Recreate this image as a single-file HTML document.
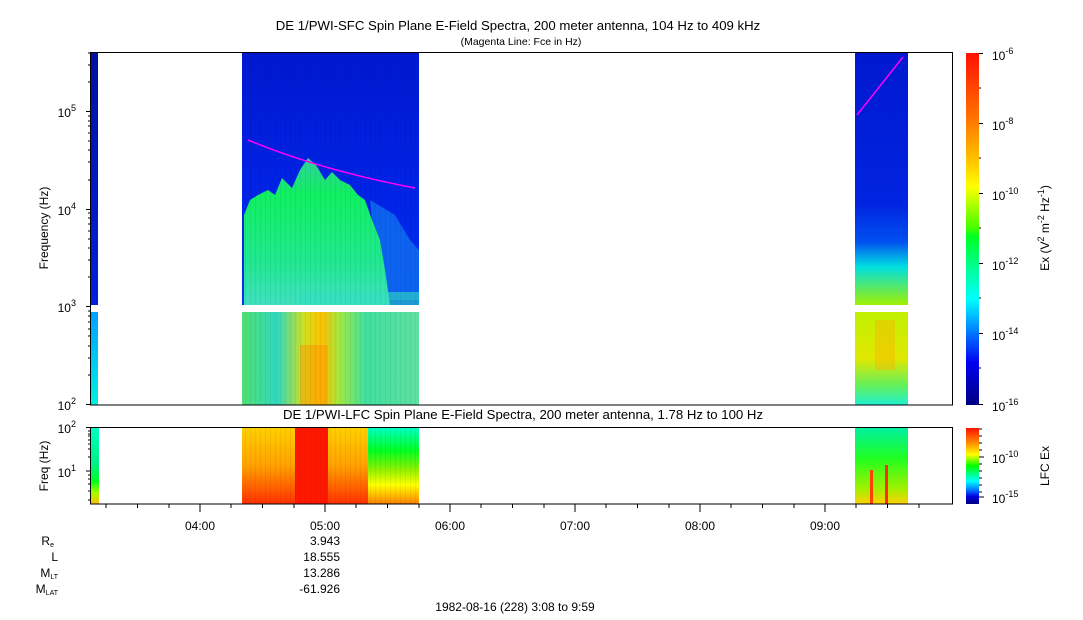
<!DOCTYPE html>
<html><head><meta charset="utf-8"><style>
html,body{margin:0;padding:0;background:#fff;}
svg{display:block;font-family:"Liberation Sans",sans-serif;}
</style></head><body>
<svg width="1083" height="620" viewBox="0 0 1083 620" xmlns="http://www.w3.org/2000/svg">
<defs>
<linearGradient id="cb" x1="0" y1="0" x2="0" y2="1">
<stop offset="0" stop-color="#ff1000"/><stop offset="0.18" stop-color="#ff7000"/>
<stop offset="0.3" stop-color="#ffc000"/><stop offset="0.38" stop-color="#ffff00"/>
<stop offset="0.5" stop-color="#40ff00"/><stop offset="0.52" stop-color="#00ff20"/>
<stop offset="0.62" stop-color="#00ffa0"/><stop offset="0.7" stop-color="#00ffff"/>
<stop offset="0.8" stop-color="#0070ff"/><stop offset="0.88" stop-color="#0000f0"/>
<stop offset="1" stop-color="#000080"/></linearGradient>
<linearGradient id="cb2" x1="0" y1="0" x2="0" y2="1">
<stop offset="0" stop-color="#ff1000"/><stop offset="0.2" stop-color="#ff9000"/>
<stop offset="0.35" stop-color="#ffff00"/><stop offset="0.5" stop-color="#00ff00"/>
<stop offset="0.7" stop-color="#00ffff"/><stop offset="0.82" stop-color="#0070ff"/>
<stop offset="0.9" stop-color="#0000e0"/><stop offset="1" stop-color="#000080"/></linearGradient>
<linearGradient id="lstrip" x1="0" y1="0" x2="0" y2="1">
<stop offset="0" stop-color="#0010a0"/><stop offset="0.5" stop-color="#0018c0"/><stop offset="1" stop-color="#0020e0"/></linearGradient>
<linearGradient id="lstrip2" x1="0" y1="0" x2="0" y2="1">
<stop offset="0" stop-color="#00a0ff"/><stop offset="0.6" stop-color="#00d0f0"/><stop offset="1" stop-color="#00f0e0"/></linearGradient>
<linearGradient id="mtop" x1="0" y1="0" x2="0" y2="1">
<stop offset="0" stop-color="#0018d0"/><stop offset="0.6" stop-color="#0024e8"/><stop offset="1" stop-color="#0030f0"/></linearGradient>
<linearGradient id="grn" x1="0" y1="0" x2="0" y2="1">
<stop offset="0" stop-color="#30d0a0"/><stop offset="0.25" stop-color="#10f060"/><stop offset="0.7" stop-color="#20e890"/><stop offset="1" stop-color="#40e0c0"/></linearGradient>
<linearGradient id="mlow" x1="0" y1="0" x2="1" y2="0">
<stop offset="0" stop-color="#50e070"/><stop offset="0.2" stop-color="#30d8c0"/><stop offset="0.35" stop-color="#d0e020"/><stop offset="0.45" stop-color="#ffc000"/><stop offset="0.55" stop-color="#a0e840"/>
<stop offset="0.7" stop-color="#40e0a0"/><stop offset="1" stop-color="#60e0a0"/></linearGradient>
<linearGradient id="rtop" x1="0" y1="0" x2="0" y2="1">
<stop offset="0" stop-color="#0018d0"/><stop offset="0.6" stop-color="#0024e0"/><stop offset="0.75" stop-color="#0050f0"/><stop offset="0.85" stop-color="#00e0e0"/><stop offset="1" stop-color="#a0f000"/></linearGradient>
<linearGradient id="rlow" x1="0" y1="0" x2="0" y2="1">
<stop offset="0" stop-color="#c0f000"/><stop offset="0.5" stop-color="#e0e800"/><stop offset="0.8" stop-color="#60f060"/><stop offset="1" stop-color="#20f0d0"/></linearGradient>
<linearGradient id="lfcm" x1="0" y1="0" x2="0" y2="1">
<stop offset="0" stop-color="#ffd000"/><stop offset="0.5" stop-color="#ffa000"/><stop offset="1" stop-color="#ff3000"/></linearGradient>
<linearGradient id="lfcr" x1="0" y1="0" x2="0" y2="1">
<stop offset="0" stop-color="#00ffc0"/><stop offset="0.3" stop-color="#00ff20"/><stop offset="0.55" stop-color="#90f000"/><stop offset="0.75" stop-color="#ffff00"/><stop offset="1" stop-color="#ff8000"/></linearGradient>
<linearGradient id="lfcR" x1="0" y1="0" x2="0" y2="1">
<stop offset="0" stop-color="#00f0a0"/><stop offset="0.4" stop-color="#20ff20"/><stop offset="0.8" stop-color="#a0f000"/><stop offset="1" stop-color="#ffd000"/></linearGradient>
<linearGradient id="lfcL" x1="0" y1="0" x2="0" y2="1">
<stop offset="0" stop-color="#00ffc0"/><stop offset="0.5" stop-color="#00f080"/><stop offset="0.7" stop-color="#00ff20"/><stop offset="0.85" stop-color="#a0ff00"/><stop offset="1" stop-color="#ffc000"/></linearGradient>
<pattern id="str" width="5" height="4" patternUnits="userSpaceOnUse">
<rect x="0" y="0" width="1" height="4" fill="#000" opacity="0.05"/></pattern>
</defs>

<text x="518" y="30" font-size="13.2" text-anchor="middle">DE 1/PWI-SFC  Spin Plane E-Field Spectra, 200 meter antenna, 104 Hz to 409 kHz</text>
<text x="521" y="45" font-size="10.5" text-anchor="middle">(Magenta Line: Fce in Hz)</text>

<rect x="91" y="52" width="7" height="253" fill="url(#lstrip)"/>
<rect x="91" y="312" width="7" height="93" fill="url(#lstrip2)"/>
<rect x="242" y="52" width="177" height="253" fill="url(#mtop)"/>
<polygon points="370,200 395,215 410,240 419,250 419,300 380,300" fill="#1070f0" opacity="0.8"/>
<polygon points="244,305 244,215 250,200 258,195 268,190 275,195 282,178 292,188 300,170 308,158 316,165 325,180 332,172 340,180 350,185 358,195 365,200 372,220 380,240 385,270 390,305" fill="url(#grn)"/>
<rect x="300" y="292" width="119" height="13" fill="#30e0c0" opacity="0.6"/>
<rect x="242" y="312" width="177" height="93" fill="url(#mlow)"/>
<rect x="300" y="345" width="28" height="60" fill="#ff9000" opacity="0.45"/>
<rect x="242" y="52" width="177" height="253" fill="url(#str)"/>
<rect x="242" y="312" width="177" height="93" fill="url(#str)"/>
<path d="M248,140 Q320,170 415,188" stroke="#ff00ff" stroke-width="1.5" fill="none"/>

<rect x="855" y="52" width="53" height="253" fill="url(#rtop)"/>
<rect x="855" y="312" width="53" height="93" fill="url(#rlow)"/>
<rect x="875" y="320" width="20" height="50" fill="#ffb000" opacity="0.4"/>
<line x1="857" y1="115" x2="903" y2="57" stroke="#ff00ff" stroke-width="1.5"/>

<rect x="90.5" y="52.5" width="862" height="352.5" fill="none" stroke="#000" stroke-width="1"/>
<g stroke="#000" stroke-width="1">
<line x1="86" y1="404.5" x2="90" y2="404.5"/><line x1="86" y1="306.5" x2="90" y2="306.5"/>
<line x1="86" y1="209.5" x2="90" y2="209.5"/><line x1="86" y1="111.5" x2="90" y2="111.5"/>
<path d="M88,375h2M88,358h2M88,346h2M88,336h2M88,329h2M88,322h2M88,316h2M88,311h2M88,277h2M88,260h2M88,248h2M88,239h2M88,231h2M88,224h2M88,218h2M88,213h2M88,180h2M88,162h2M88,150h2M88,141h2M88,133h2M88,126h2M88,121h2M88,116h2M88,82h2M88,65h2M88,53h2"/>
</g>
<g font-size="12" text-anchor="end">
<text x="76" y="410">10<tspan font-size="9" dy="-6">2</tspan></text>
<text x="76" y="312">10<tspan font-size="9" dy="-6">3</tspan></text>
<text x="76" y="215">10<tspan font-size="9" dy="-6">4</tspan></text>
<text x="76" y="117">10<tspan font-size="9" dy="-6">5</tspan></text>
</g>
<text transform="translate(48,228) rotate(-90)" font-size="12" text-anchor="middle">Frequency (Hz)</text>

<rect x="966" y="53" width="13" height="352" fill="url(#cb)"/>
<g stroke="#000"><path d="M979,53.5h4M979,88h2M979,123.5h4M979,158h2M979,193.5h4M979,228h2M979,263.5h4M979,298h2M979,333.5h4M979,368h2M979,404.5h4"/></g>
<g font-size="12">
<text x="992" y="60">10<tspan font-size="9" dy="-6">-6</tspan></text>
<text x="992" y="130">10<tspan font-size="9" dy="-6">-8</tspan></text>
<text x="992" y="200">10<tspan font-size="9" dy="-6">-10</tspan></text>
<text x="992" y="270">10<tspan font-size="9" dy="-6">-12</tspan></text>
<text x="992" y="340">10<tspan font-size="9" dy="-6">-14</tspan></text>
<text x="992" y="411">10<tspan font-size="9" dy="-6">-16</tspan></text>
</g>
<text transform="translate(1049,228) rotate(-90)" font-size="12" text-anchor="middle">Ex (V<tspan font-size="9" dy="-5">2</tspan><tspan dy="5"> m</tspan><tspan font-size="9" dy="-5">-2</tspan><tspan dy="5"> Hz</tspan><tspan font-size="9" dy="-5">-1</tspan><tspan dy="5">)</tspan></text>

<text x="523" y="419" font-size="13.2" text-anchor="middle">DE 1/PWI-LFC  Spin Plane E-Field Spectra, 200 meter antenna, 1.78 Hz to 100 Hz</text>

<rect x="91" y="428" width="8" height="76" fill="url(#lfcL)"/>
<rect x="242" y="428" width="177" height="76" fill="url(#lfcm)"/>
<rect x="295" y="428" width="33" height="76" fill="#ff1800"/>
<rect x="368" y="428" width="51" height="76" fill="url(#lfcr)"/>
<rect x="242" y="428" width="177" height="76" fill="url(#str)"/>
<rect x="855" y="428" width="53" height="76" fill="url(#lfcR)"/>
<rect x="870" y="470" width="3" height="34" fill="#ff4000"/><rect x="885" y="465" width="3" height="39" fill="#ff3000"/>
<rect x="90.5" y="427.5" width="862" height="76.5" fill="none" stroke="#000"/>
<g stroke="#000"><path d="M86,427.5h4M86,471h4M88,500h2M88,491h2M88,484h2M88,479h2M88,475h2M88,457h2M88,449h2M88,444h2M88,440h2M88,436h2M88,434h2M88,431h2"/></g>
<g font-size="12" text-anchor="end">
<text x="76" y="433">10<tspan font-size="9" dy="-6">2</tspan></text>
<text x="76" y="477">10<tspan font-size="9" dy="-6">1</tspan></text>
</g>
<text transform="translate(48,466) rotate(-90)" font-size="12" text-anchor="middle">Freq (Hz)</text>

<rect x="966" y="428" width="13" height="76" fill="url(#cb2)"/>
<g stroke="#000"><path d="M979,429h3M979,436h3M979,443h3M979,450h3M979,457h5M979,464h3M979,471h3M979,478h3M979,485h3M979,492h3M979,497h5"/></g>
<g font-size="12">
<text x="992" y="463">10<tspan font-size="9" dy="-6">-10</tspan></text>
<text x="992" y="503">10<tspan font-size="9" dy="-6">-15</tspan></text>
</g>
<text transform="translate(1049,466) rotate(-90)" font-size="12" text-anchor="middle">LFC Ex</text>

<g stroke="#000">
<path d="M106,504v4M137.5,504v4M169,504v4M200,504v8M231,504v4M262.5,504v4M294,504v4M325,504v8M356,504v4M387.5,504v4M419,504v4M450,504v8M481,504v4M512.5,504v4M544,504v4M575,504v8M606,504v4M637.5,504v4M669,504v4M700,504v8M731,504v4M762.5,504v4M794,504v4M825,504v8M856,504v4M887.5,504v4M919,504v4"/>
</g>
<g font-size="12" text-anchor="middle">
<text x="200" y="530">04:00</text><text x="325" y="530">05:00</text><text x="450" y="530">06:00</text>
<text x="575" y="530">07:00</text><text x="700" y="530">08:00</text><text x="825" y="530">09:00</text>
</g>
<g font-size="12" text-anchor="end">
<text x="54" y="545">R<tspan font-size="7" dy="2">e</tspan></text>
<text x="58" y="561">L</text>
<text x="58" y="577">M<tspan font-size="7" dy="2">LT</tspan></text>
<text x="58" y="593">M<tspan font-size="7" dy="2">LAT</tspan></text>
<text x="340" y="545">3.943</text><text x="340" y="561">18.555</text>
<text x="340" y="577">13.286</text><text x="340" y="593">-61.926</text>
</g>
<text x="515" y="611" font-size="12" text-anchor="middle">1982-08-16 (228) 3:08 to 9:59</text>
</svg>
</body></html>
